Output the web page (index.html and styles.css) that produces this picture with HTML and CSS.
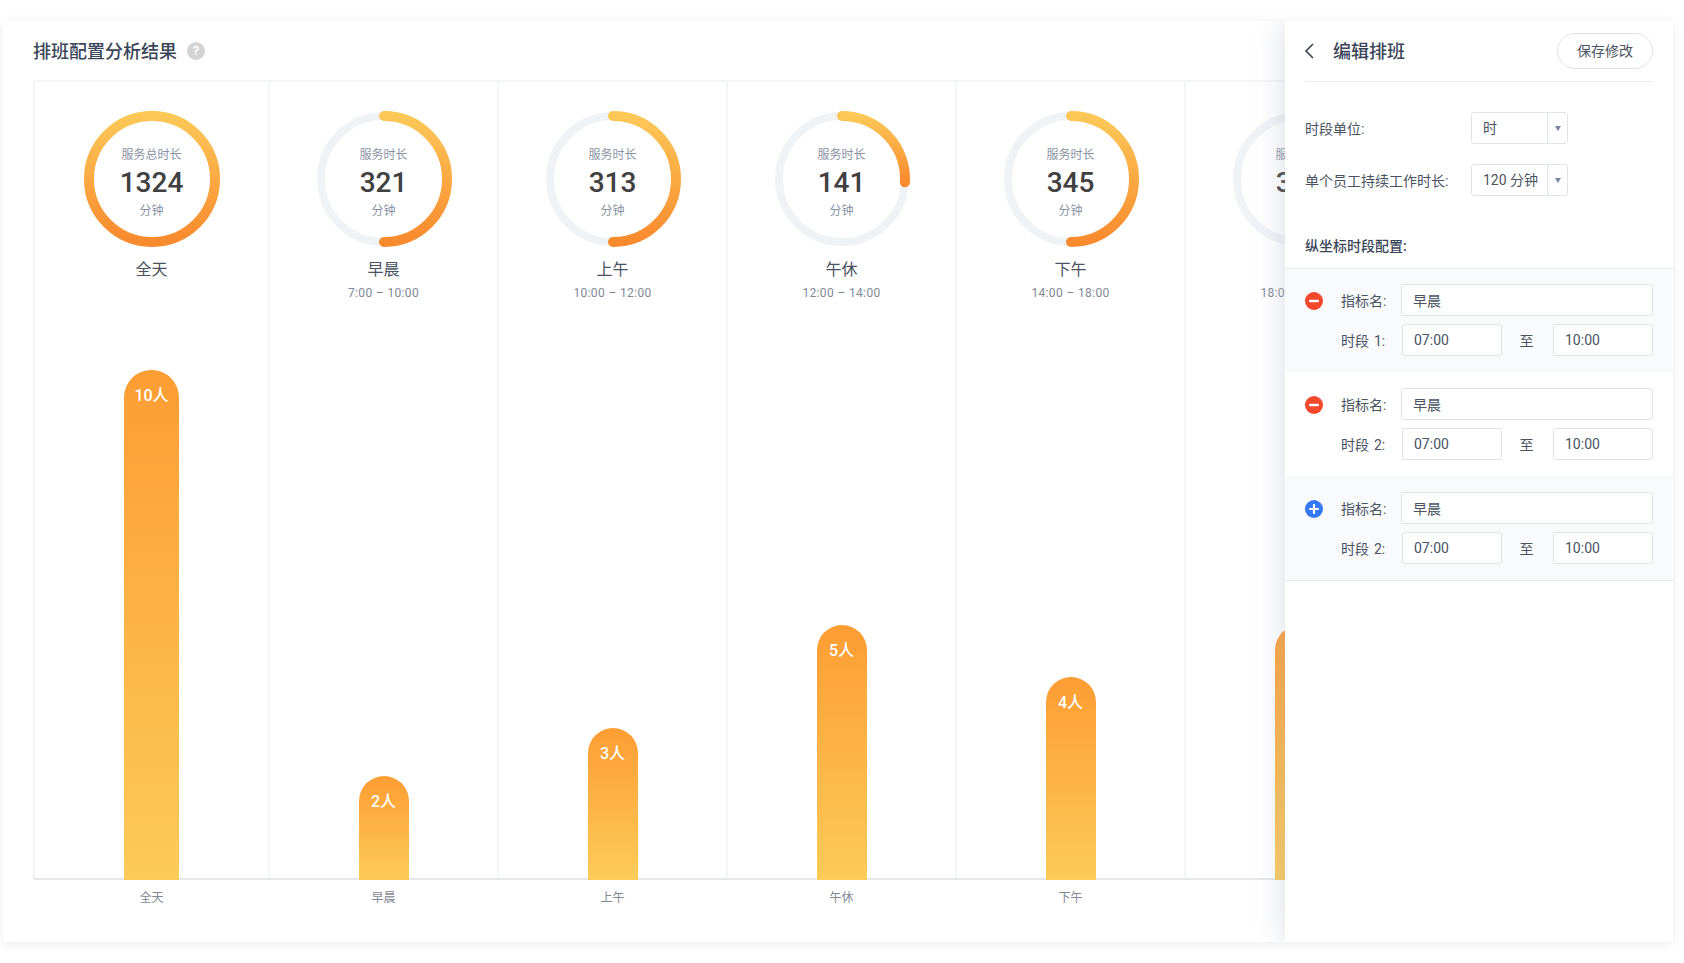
FILE: index.html
```html
<!DOCTYPE html>
<html lang="zh-CN">
<head>
    <meta charset="UTF-8">
    <title>排班配置分析结果</title>
    <link rel="stylesheet" href="styles.css">
</head>
<body>
    <div class="card">
        <div class="title-row">
            <h1>排班配置分析结果</h1>
            <span class="help">?</span>
        </div>

        <div class="chart">
            <!-- 全天 -->
            <div class="col">
                <div class="ring">
                    <svg width="136" height="136" viewBox="0 0 136 136">
                        <defs>
                            <linearGradient id="ringGrad" x1="0" y1="0" x2="0" y2="1">
                                <stop offset="0" stop-color="#fcc858"/>
                                <stop offset="1" stop-color="#f98a2e"/>
                            </linearGradient>
                        </defs>
                        <circle class="arc" cx="68" cy="68" r="63"/>
                    </svg>
                    <div class="ring-text">
                        <span>服务总时长</span>
                        <b>1324</b>
                        <span>分钟</span>
                    </div>
                </div>
                <div class="name">全天</div>
                <div class="range"></div>
                <div class="bar bar-wide" style="height: 510px">10人</div>
            </div>

            <!-- 早晨 -->
            <div class="col">
                <div class="ring">
                    <svg width="136" height="136" viewBox="0 0 136 136">
                        <circle class="track" cx="68" cy="68" r="63"/>
                        <path class="arc" d="M68 5 A63 63 0 0 1 68 131"/>
                    </svg>
                    <div class="ring-text">
                        <span>服务时长</span>
                        <b>321</b>
                        <span>分钟</span>
                    </div>
                </div>
                <div class="name">早晨</div>
                <div class="range">7:00 – 10:00</div>
                <div class="bar" style="height: 104px">2人</div>
            </div>

            <!-- 上午 -->
            <div class="col">
                <div class="ring">
                    <svg width="136" height="136" viewBox="0 0 136 136">
                        <circle class="track" cx="68" cy="68" r="63"/>
                        <path class="arc" d="M68 5 A63 63 0 0 1 68 131"/>
                    </svg>
                    <div class="ring-text">
                        <span>服务时长</span>
                        <b>313</b>
                        <span>分钟</span>
                    </div>
                </div>
                <div class="name">上午</div>
                <div class="range">10:00 – 12:00</div>
                <div class="bar" style="height: 152px">3人</div>
            </div>

            <!-- 午休 -->
            <div class="col">
                <div class="ring">
                    <svg width="136" height="136" viewBox="0 0 136 136">
                        <circle class="track" cx="68" cy="68" r="63"/>
                        <path class="arc" d="M68 5 A63 63 0 0 1 130.9 71.3"/>
                    </svg>
                    <div class="ring-text">
                        <span>服务时长</span>
                        <b>141</b>
                        <span>分钟</span>
                    </div>
                </div>
                <div class="name">午休</div>
                <div class="range">12:00 – 14:00</div>
                <div class="bar" style="height: 255px">5人</div>
            </div>

            <!-- 下午 -->
            <div class="col">
                <div class="ring">
                    <svg width="136" height="136" viewBox="0 0 136 136">
                        <circle class="track" cx="68" cy="68" r="63"/>
                        <path class="arc" d="M68 5 A63 63 0 0 1 68 131"/>
                    </svg>
                    <div class="ring-text">
                        <span>服务时长</span>
                        <b>345</b>
                        <span>分钟</span>
                    </div>
                </div>
                <div class="name">下午</div>
                <div class="range">14:00 – 18:00</div>
                <div class="bar" style="height: 203px">4人</div>
            </div>

            <!-- 晚上, mostly under the panel -->
            <div class="col">
                <div class="ring">
                    <svg width="136" height="136" viewBox="0 0 136 136">
                        <circle class="track" cx="68" cy="68" r="63"/>
                    </svg>
                    <div class="ring-text">
                        <span>服务时长</span>
                        <b>300</b>
                        <span>分钟</span>
                    </div>
                </div>
                <div class="name name-small">晚上</div>
                <div class="range">18:00 – 22:00</div>
                <div class="bar" style="height: 255px">5人</div>
            </div>
        </div>

        <div class="axis">
            <span>全天</span>
            <span>早晨</span>
            <span>上午</span>
            <span>午休</span>
            <span>下午</span>
            <span>晚上</span>
        </div>

        <div class="panel">
            <div class="panel-head">
                <svg class="back" width="12" height="18" viewBox="0 0 12 18">
                    <path d="M10 2 L3 9 L10 16" fill="none" stroke="#3a4352" stroke-width="1.6"/>
                </svg>
                <h2>编辑排班</h2>
                <button class="save">保存修改</button>
            </div>

            <div class="form-row">
                <label>时段单位:</label>
                <div class="select">
                    <span class="select-value">时</span>
                    <span class="select-arrow"></span>
                </div>
            </div>
            <div class="form-row">
                <label>单个员工持续工作时长:</label>
                <div class="select">
                    <span class="select-value">120 分钟</span>
                    <span class="select-arrow"></span>
                </div>
            </div>

            <h3>纵坐标时段配置:</h3>

            <div class="groups">
                <div class="group shaded first">
                    <div class="name-row">
                        <svg class="icon" width="18" height="18" viewBox="0 0 18 18">
                            <circle cx="9" cy="9" r="9" fill="#f5472b"/>
                            <rect x="4" y="7.8" width="10" height="2.4" rx="1" fill="#fff"/>
                        </svg>
                        <span class="field-label">指标名:</span>
                        <div class="input grow">早晨</div>
                    </div>
                    <div class="time-row">
                        <span class="field-label">时段 1:</span>
                        <div class="input">07:00</div>
                        <span class="to">至</span>
                        <div class="input">10:00</div>
                    </div>
                </div>

                <div class="group">
                    <div class="name-row">
                        <svg class="icon" width="18" height="18" viewBox="0 0 18 18">
                            <circle cx="9" cy="9" r="9" fill="#f5472b"/>
                            <rect x="4" y="7.8" width="10" height="2.4" rx="1" fill="#fff"/>
                        </svg>
                        <span class="field-label">指标名:</span>
                        <div class="input grow">早晨</div>
                    </div>
                    <div class="time-row">
                        <span class="field-label">时段 2:</span>
                        <div class="input">07:00</div>
                        <span class="to">至</span>
                        <div class="input">10:00</div>
                    </div>
                </div>

                <div class="group shaded">
                    <div class="name-row">
                        <svg class="icon" width="18" height="18" viewBox="0 0 18 18">
                            <circle cx="9" cy="9" r="9" fill="#3478f6"/>
                            <rect x="4" y="7.9" width="10" height="2.2" rx="1" fill="#fff"/>
                            <rect x="7.9" y="4" width="2.2" height="10" rx="1" fill="#fff"/>
                        </svg>
                        <span class="field-label">指标名:</span>
                        <div class="input grow">早晨</div>
                    </div>
                    <div class="time-row">
                        <span class="field-label">时段 2:</span>
                        <div class="input">07:00</div>
                        <span class="to">至</span>
                        <div class="input">10:00</div>
                    </div>
                </div>
            </div>
        </div>
    </div>
</body>
</html>
```

FILE: styles.css
```css
* {
    box-sizing: border-box;
}

body {
    margin: 0;
    padding: 21px 11px 21px 3px;
    height: 963px;
    overflow: hidden;
    background-color: white;
    color: #4a5362;
    font-family: Roboto, 'Noto Sans CJK SC', sans-serif;
}

.card {
    position: relative;
    width: 1670px;
    height: 921px;
    padding: 18px 0 0 30px;
    overflow: hidden;
    background-color: white;
    box-shadow: 0 2px 10px rgba(50, 60, 80, 0.1);
}

.title-row {
    display: flex;
    align-items: center;
    height: 24px;
    margin-bottom: 17px;
}

.title-row h1 {
    margin: 0;
    padding-bottom: 2px;
    font-size: 18px;
    font-weight: 500;
    color: #3a4559;
}

.help {
    width: 18px;
    height: 18px;
    margin-left: 10px;
    border-radius: 50%;
    background-color: #d4d4d4;
    color: white;
    font-size: 13px;
    font-weight: 700;
    line-height: 18px;
    text-align: center;
}

.chart {
    display: grid;
    grid-template-columns: 235px repeat(5, 229px);
    height: 800px;
    border-top: 2px solid #f4f5f7;
    border-left: 2px solid #f4f5f7;
    border-bottom: 2px solid #e6e7ea;
}

.col {
    display: flex;
    flex-direction: column;
    align-items: center;
    padding-top: 29px;
    border-right: 2px solid #f4f5f7;
}

.ring {
    display: grid;
    width: 136px;
    height: 136px;
}

.ring > * {
    grid-area: 1 / 1;
}

.track {
    fill: none;
    stroke: #f0f3f6;
    stroke-width: 8;
}

.arc {
    fill: none;
    stroke: url(#ringGrad);
    stroke-width: 10;
    stroke-linecap: round;
}

.ring-text {
    display: flex;
    flex-direction: column;
    align-items: center;
    padding-top: 35px;
    font-size: 12px;
    line-height: 18px;
    color: #8a93a3;
}

.ring-text b {
    margin: 1px 0;
    font-size: 28px;
    font-weight: 500;
    line-height: 36px;
    color: #404040;
}

.name {
    margin-top: 11px;
    font-size: 16px;
    line-height: 24px;
}

.name-small {
    font-size: 14px;
}

.range {
    height: 18px;
    margin-top: 2px;
    font-size: 12px;
    line-height: 18px;
    letter-spacing: 0.35px;
    color: #7f8896;
}

.bar {
    width: 50px;
    margin-top: auto;
    margin-bottom: -2px;
    padding-top: 15px;
    border-radius: 25px 25px 0 0;
    background: linear-gradient(#fd9d33, #fccb58);
    color: white;
    font-size: 16px;
    font-weight: 500;
    line-height: 22px;
    text-align: center;
}

.bar-wide {
    width: 55px;
    border-radius: 27.5px 27.5px 0 0;
}

.axis {
    display: grid;
    grid-template-columns: 235px repeat(5, 229px);
    margin-left: 1px;
    padding-top: 9px;
    font-size: 12px;
    line-height: 18px;
    color: #7f8896;
    text-align: center;
}

/* edit panel on top of the chart */
.panel {
    position: absolute;
    top: 0;
    right: 0;
    bottom: 0;
    width: 388px;
    padding-left: 20px;
    padding-right: 20px;
    background-color: white;
    box-shadow: 0 0 30px rgba(170, 178, 195, 0.45);
}

.panel-head {
    display: flex;
    align-items: center;
    height: 61px;
    margin-bottom: 30px;
    border-bottom: 1px solid #e8ebf0;
}

.back {
    margin-left: -2px;
    margin-right: 18px;
}

.panel-head h2 {
    flex: 1;
    margin: 0;
    padding-bottom: 2px;
    font-size: 18px;
    font-weight: 500;
    color: #3a4559;
}

.save {
    width: 96px;
    height: 36px;
    padding-bottom: 3px;
    border: 1px solid #dfe3ea;
    border-radius: 18px;
    background-color: white;
    color: #4a5362;
    font-family: inherit;
    font-size: 14px;
}

.form-row {
    display: flex;
    align-items: center;
    margin-bottom: 20px;
    font-size: 14px;
}

.form-row label {
    width: 166px;
    padding-bottom: 1px;
}

.select {
    display: flex;
    width: 97px;
    height: 32px;
    border: 1px solid #dfe3ea;
    border-radius: 3px;
    line-height: 30px;
}

.select-value {
    flex: 1;
    padding-left: 11px;
    border-right: 1px solid #dfe3ea;
}

.select-arrow {
    width: 19px;
    position: relative;
}

.select-arrow::after {
    content: "";
    position: absolute;
    left: 7px;
    top: 13px;
    border-top: 5px solid #7a85a0;
    border-left: 3px solid transparent;
    border-right: 3px solid transparent;
}

.panel h3 {
    margin: 40px 0 12px;
    font-size: 14px;
    font-weight: 500;
    line-height: 20px;
    color: #3a4559;
}

.groups {
    margin: 0 -20px;
    border-top: 1px solid #e8ebf0;
    border-bottom: 1px solid #e8ebf0;
}

.group {
    display: flex;
    flex-direction: column;
    gap: 8px;
    height: 104px;
    padding: 16px 20px;
}

.group.first {
    height: 103px;
    padding-top: 15px;
}

.group.shaded {
    background-color: #f9fafc;
}

.name-row,
.time-row {
    display: flex;
    align-items: center;
    font-size: 14px;
}

.icon {
    margin-top: 2px;
    margin-right: 18px;
}

.field-label {
    padding-bottom: 1px;
    word-spacing: 1.5px;
}

.name-row .field-label {
    width: 60px;
}

.time-row {
    padding-left: 36px;
}

.time-row .field-label {
    width: 61px;
}

.input {
    width: 100px;
    height: 32px;
    padding-left: 11px;
    border: 1px solid #dfe3ea;
    border-radius: 3px;
    background-color: white;
    line-height: 30px;
}

.input.grow {
    flex: 1;
    line-height: 32px;
}

.to {
    width: 51px;
    padding: 0 2px 1px 0;
    text-align: center;
}
```
